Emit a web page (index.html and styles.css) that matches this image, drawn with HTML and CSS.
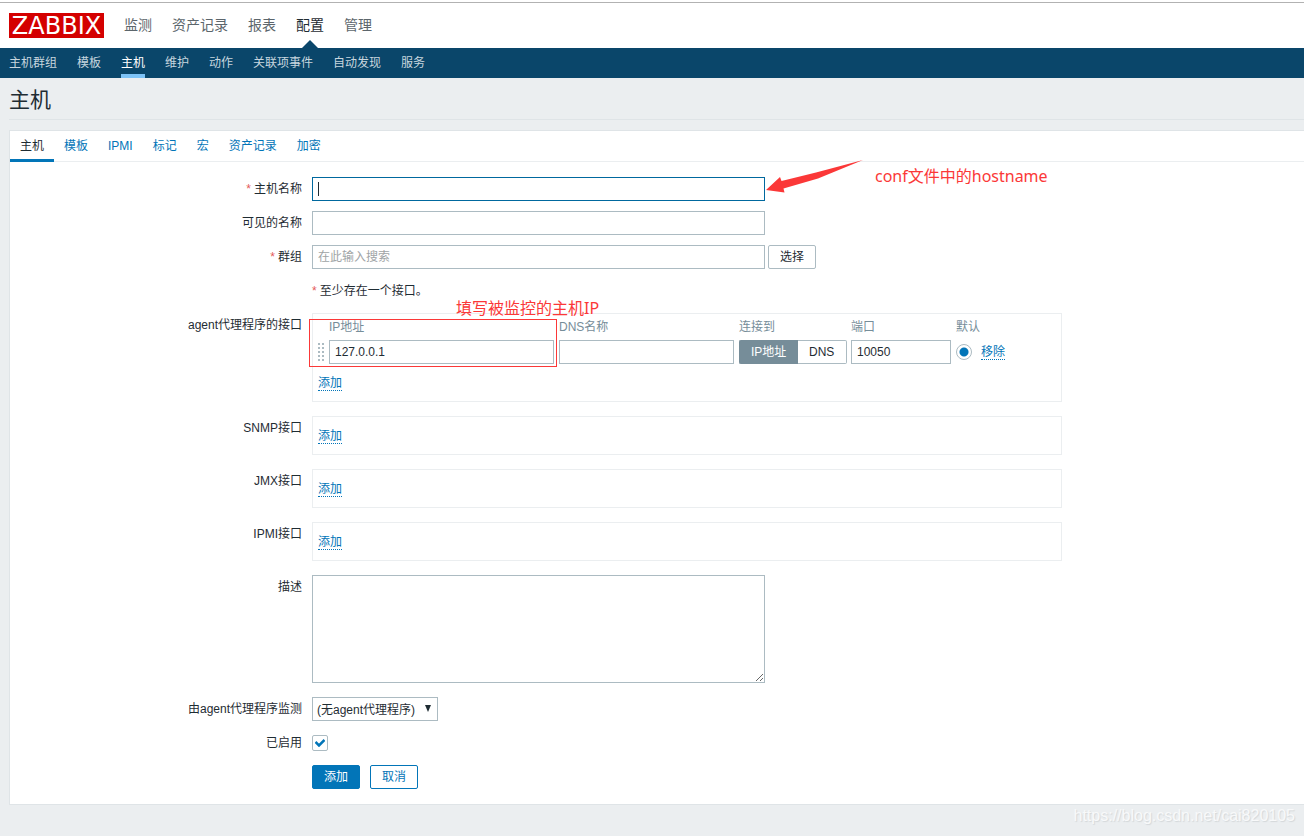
FILE: index.html
```html
<!DOCTYPE html>
<html lang="zh-CN">
<head>
<meta charset="utf-8">
<title>主机</title>
<link rel="stylesheet" href="styles.css">
</head>
<body>
<header class="header">
  <a class="logo" href="#">ZABBIX</a>
  <nav class="top-nav">
    <a href="#">监测</a>
    <a href="#">资产记录</a>
    <a href="#">报表</a>
    <a href="#" class="selected">配置</a>
    <a href="#">管理</a>
  </nav>
</header>
<nav class="sub-nav">
  <a href="#">主机群组</a>
  <a href="#">模板</a>
  <a href="#" class="selected">主机</a>
  <a href="#">维护</a>
  <a href="#">动作</a>
  <a href="#">关联项事件</a>
  <a href="#">自动发现</a>
  <a href="#">服务</a>
</nav>
<main class="page">
  <h1 class="title">主机</h1>
  <section class="panel">
    <nav class="tabs">
      <a href="#" class="selected">主机</a>
      <a href="#">模板</a>
      <a href="#">IPMI</a>
      <a href="#">标记</a>
      <a href="#">宏</a>
      <a href="#">资产记录</a>
      <a href="#">加密</a>
    </nav>
    <form class="form">
      <div class="row">
        <label class="label required" for="host">主机名称</label>
        <div class="field">
          <div class="host-wrap">
            <input class="text wide focused" id="host" type="text">
            <span class="caret"></span>
            <svg class="arrow" width="98" height="36" viewBox="0 0 98 36" aria-hidden="true"><path d="M0 30L14 17L15.500 21L50 12.500L97 0L52 18.500L17.500 28.500L18.500 32.500Z" fill="#fb3838"/></svg>
            <span class="note note-host">conf文件中的hostname</span>
          </div>
        </div>
      </div>
      <div class="row">
        <label class="label" for="visible">可见的名称</label>
        <div class="field"><input class="text wide" id="visible" type="text"></div>
      </div>
      <div class="row">
        <label class="label required" for="groups">群组</label>
        <div class="field">
          <input class="text wide" id="groups" type="text" placeholder="在此输入搜索">
          <button class="btn btn-grey" type="button">选择</button>
        </div>
      </div>
      <div class="row">
        <span class="label"></span>
        <div class="field hint required">至少存在一个接口。</div>
      </div>
      <div class="row spaced">
        <span class="label">agent代理程序的接口</span>
        <div class="box box-agent">
          <span class="highlight"></span>
          <span class="note note-ip">填写被监控的主机IP</span>
          <table class="interfaces">
            <thead>
              <tr>
                <th class="col-grip"></th>
                <th class="col-ip">IP地址</th>
                <th class="col-dns">DNS名称</th>
                <th class="col-connect">连接到</th>
                <th class="col-port">端口</th>
                <th class="col-default">默认</th>
                <th class="col-action"></th>
              </tr>
            </thead>
            <tbody>
              <tr>
                <td><svg class="grip" width="6" height="18" viewBox="0 0 6 18" aria-hidden="true"><path d="M1 0V18M5 0V18" stroke="#acbbc2" stroke-width="2" stroke-dasharray="2 2"/></svg></td>
                <td><input class="text" type="text" value="127.0.0.1" aria-label="IP地址"></td>
                <td><input class="text" type="text" aria-label="DNS名称"></td>
                <td>
                  <div class="segmented">
                    <input type="radio" name="useip" id="use-ip" checked><label for="use-ip">IP地址</label>
                    <input type="radio" name="useip" id="use-dns"><label for="use-dns">DNS</label>
                  </div>
                </td>
                <td><input class="text" type="text" value="10050" aria-label="端口"></td>
                <td><input class="radio" type="radio" name="main" checked aria-label="默认"></td>
                <td><a class="link" href="#">移除</a></td>
              </tr>
            </tbody>
          </table>
          <a class="link add" href="#">添加</a>
        </div>
      </div>
      <div class="row spaced">
        <span class="label">SNMP接口</span>
        <div class="box"><a class="link add" href="#">添加</a></div>
      </div>
      <div class="row spaced">
        <span class="label">JMX接口</span>
        <div class="box"><a class="link add" href="#">添加</a></div>
      </div>
      <div class="row spaced">
        <span class="label">IPMI接口</span>
        <div class="box"><a class="link add" href="#">添加</a></div>
      </div>
      <div class="row spaced">
        <label class="label" for="description">描述</label>
        <div class="field"><textarea class="text wide area" id="description"></textarea></div>
      </div>
      <div class="row">
        <label class="label" for="proxy">由agent代理程序监测</label>
        <div class="field">
          <div class="select-wrap">
            <select class="select" id="proxy"><option>(无agent代理程序)</option></select>
            <svg class="select-arrow" width="8" height="7" viewBox="0 0 8 7" aria-hidden="true"><path d="M1 0H7L4 7Z" fill="#1f2c33"/></svg>
          </div>
        </div>
      </div>
      <div class="row">
        <label class="label" for="enabled">已启用</label>
        <div class="field check-field">
          <input class="checkbox" id="enabled" type="checkbox" checked>
          <svg class="tick" width="10" height="8" viewBox="0 0 10 8" aria-hidden="true"><path d="M0.500 3L4 6.500L9.500 1" fill="none" stroke="#0275b8" stroke-width="2.500"/></svg>
        </div>
      </div>
      <div class="row">
        <span class="label"></span>
        <div class="field actions">
          <button class="btn btn-main" type="button">添加</button>
          <button class="btn btn-alt" type="button">取消</button>
        </div>
      </div>
    </form>
  </section>
</main>
<div class="watermark">https://blog.csdn.net/cai820105</div>
</body>
</html>
```
FILE: styles.css
```css
* { box-sizing: border-box; }

body {
  margin: 0;
  min-height: 100vh;
  position: relative;
  padding-top: 2px;
  background: linear-gradient(#fff, #fff) top / 100% 2px no-repeat #ebeef0;
  color: #1f2c33;
  font-family: "Liberation Sans", "Noto Sans CJK SC", sans-serif;
  font-size: 12px;
  line-height: 16px;
}

a { color: #0275b8; text-decoration: none; }

input, select, textarea, button { font: inherit; color: inherit; margin: 0; }

.header {
  display: flex;
  align-items: center;
  gap: 20px;
  height: 46px;
  padding-left: 9px;
  border-top: 1px solid #b2b2b2;
  background: #fff;
}

.logo {
  height: 25px;
  width: 95px;
  background: #d40000;
  color: #fff;
  font: 24px/26px "DejaVu Sans", sans-serif;
  text-align: center;
}

.top-nav { display: flex; gap: 20px; height: 100%; font-size: 14px; line-height: 44px; }
.top-nav a { position: relative; color: #5c666c; }
.top-nav .selected { color: #1f2c33; }
.top-nav .selected::after {
  content: "";
  position: absolute;
  bottom: 0;
  left: 50%;
  margin-left: -8px;
  border: 8px solid transparent;
  border-top-width: 0;
  border-bottom-color: #0a466a;
}

.sub-nav {
  display: flex;
  gap: 20px;
  height: 30px;
  padding-left: 9px;
  background: #0a466a;
  line-height: 30px;
}
.sub-nav a { color: #c7d6df; }
.sub-nav .selected { color: #fff; border-bottom: 4px solid #7dc3f7; }

.page { padding: 0 0 30px 9px; }

.title {
  margin: 0 0 10px;
  height: 42px;
  border-bottom: 1px solid #dfe4e7;
  font-size: 21px;
  font-weight: 400;
  line-height: 44px;
}

.panel { border: 1px solid #dfe4e7; border-right: 0; background: #fff; }

.tabs { display: flex; height: 31px; border-bottom: 1px solid #ebeef0; line-height: 30px; }
.tabs a { height: 31px; padding: 0 10px; }
.tabs .selected { color: #1f2c33; border-bottom: 3px solid #0275b8; }

.form { padding: 15px 0; }

.row {
  display: grid;
  grid-template-columns: 292px minmax(0, 750px);
  column-gap: 10px;
  margin-bottom: 10px;
}
.row.spaced { margin-bottom: 14px; }
.row:last-child { margin-bottom: 0; }

.label { text-align: right; line-height: 24px; }
.required::before { content: "*"; margin-right: 3px; color: #e45959; }

.field { display: flex; align-items: center; gap: 3px; min-height: 24px; }
.hint { gap: 0; }

.text {
  width: 100%;
  height: 24px;
  padding: 0 5px;
  border: 1px solid #acbbc2;
  border-radius: 0;
  background: #fff;
  outline: 0;
}
.text::placeholder { color: #a0a4a6; opacity: 1; }
.wide { width: 453px; }
.focused { border-color: #00689e; }
.area { display: block; height: 108px; resize: both; }

.host-wrap { position: relative; }
.caret { position: absolute; left: 6px; top: 5px; width: 1px; height: 14px; background: #1f2c33; }
.arrow { position: absolute; left: 454px; top: -17px; }

.note {
  position: absolute;
  color: #fb3838;
  font-family: "Noto Sans", "Noto Sans CJK SC", sans-serif;
  font-size: 16px;
  line-height: 20px;
  white-space: nowrap;
}
.note-host { left: 563px; top: -11px; }
.note-ip { left: 143px; top: -16px; }
.highlight { position: absolute; left: -4px; top: 5px; width: 248px; height: 48px; border: 1px solid #fb3838; }

.btn { height: 24px; padding: 1px 11px 0; border: 1px solid #0275b8; border-radius: 2px; background: #fff; line-height: 21px; }
.btn-grey { border-color: #acbbc2; }
.btn-main { background: #0275b8; color: #fff; }
.btn-alt { color: #0275b8; }
.actions { gap: 10px; }

.box { position: relative; padding: 12px 5px 9px; border: 1px solid #ebeef0; }
.box-agent { padding-top: 4px; }
.link { display: inline-block; border-bottom: 1px dotted #0275b8; line-height: 14px; }
.add { display: block; width: 24px; margin-bottom: 1px; }

.interfaces { table-layout: fixed; width: 700px; margin-bottom: 12px; border-collapse: collapse; }
.interfaces th { padding: 0; height: 18px; color: #768d99; font-weight: 400; text-align: left; line-height: 18px; }
.interfaces td { padding: 4px 5px 0 0; }
.col-grip { width: 11px; }
.col-ip { width: 230px; }
.col-dns { width: 180px; }
.col-connect { width: 112px; }
.col-port { width: 105px; }
.col-default { width: 25px; }
.grip { display: block; }

.segmented { display: flex; width: 108px; height: 24px; }
.segmented input { position: absolute; opacity: 0; }
.segmented label {
  flex: 1 0 auto;
  padding: 0 11px;
  border: 1px solid #acbbc2;
  border-left: 0;
  border-radius: 0 2px 2px 0;
  line-height: 22px;
}
.segmented label:first-of-type { border-left: 1px solid #acbbc2; border-right: 0; border-radius: 2px 0 0 2px; }
.segmented input:checked + label { background: #768d99; border-color: #768d99; color: #fff; }

.radio {
  appearance: none;
  display: block;
  width: 16px;
  height: 16px;
  border: 1px solid #acbbc2;
  border-radius: 50%;
  background: radial-gradient(circle, #0275b8 4px, #fff 5px);
}

.select-wrap { position: relative; }
.select { appearance: none; width: 126px; height: 24px; padding: 2px 4px 0; border: 1px solid #acbbc2; border-radius: 0; background: #fff; }
.select-arrow { position: absolute; right: 6px; top: 8px; }

.check-field { position: relative; }
.checkbox { appearance: none; width: 16px; height: 16px; border: 1px solid #acbbc2; border-radius: 2px; background: #fff; }
.tick { position: absolute; left: 3px; top: 8px; pointer-events: none; }

.watermark {
  position: absolute;
  right: 9px;
  bottom: 10px;
  color: #f8f9fa;
  font-size: 16px;
  line-height: 20px;
  text-shadow: 1px 1px 1px #d3d7d9;
}
```
